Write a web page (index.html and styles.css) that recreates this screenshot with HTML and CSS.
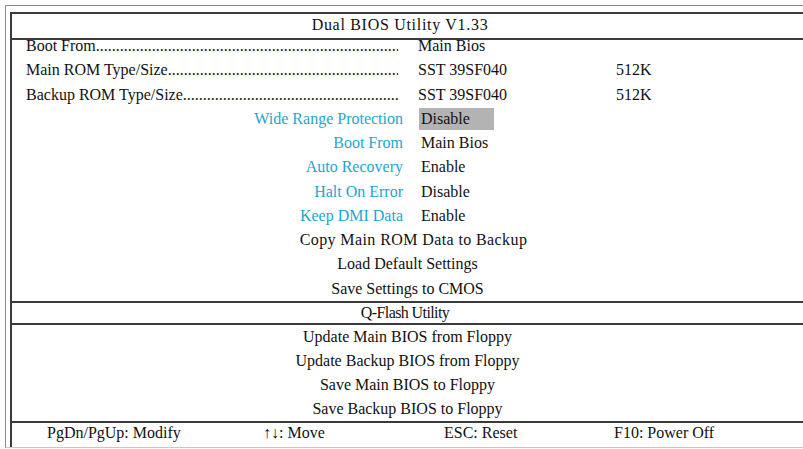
FILE: index.html
```html
<!DOCTYPE html>
<html lang="en">
<head>
  <meta charset="UTF-8">
  <title>Dual BIOS Utility V1.33</title>
  <link rel="stylesheet" href="styles.css">
</head>
<body>
  <div class="frame">
    <div class="panel">
      <div class="title">Dual BIOS Utility V1.33</div>

      <div class="main">
        <div class="info-row">
          <span class="leader">Boot From</span>
          <span>Main Bios</span>
          <span></span>
        </div>
        <div class="info-row">
          <span class="leader">Main ROM Type/Size</span>
          <span>SST 39SF040</span>
          <span>512K</span>
        </div>
        <div class="info-row">
          <span class="leader">Backup ROM Type/Size</span>
          <span>SST 39SF040</span>
          <span>512K</span>
        </div>

        <div class="set-row">
          <span class="set-label">Wide Range Protection</span>
          <span class="set-value selected">Disable</span>
        </div>
        <div class="set-row">
          <span class="set-label">Boot From</span>
          <span class="set-value">Main Bios</span>
        </div>
        <div class="set-row">
          <span class="set-label">Auto Recovery</span>
          <span class="set-value">Enable</span>
        </div>
        <div class="set-row">
          <span class="set-label">Halt On Error</span>
          <span class="set-value">Disable</span>
        </div>
        <div class="set-row">
          <span class="set-label">Keep DMI Data</span>
          <span class="set-value">Enable</span>
        </div>

        <div class="action wide">Copy Main ROM Data to Backup</div>
        <div class="action">Load Default Settings</div>
        <div class="action">Save Settings to CMOS</div>
      </div>

      <div class="subtitle">Q-Flash Utility</div>

      <div class="flash">
        <div class="action">Update Main BIOS from Floppy</div>
        <div class="action">Update Backup BIOS from Floppy</div>
        <div class="action">Save Main BIOS to Floppy</div>
        <div class="action">Save Backup BIOS to Floppy</div>
      </div>

      <div class="keys">
        <span>PgDn/PgUp: Modify</span>
        <span>&uarr;&darr;: Move</span>
        <span>ESC: Reset</span>
        <span>F10: Power Off</span>
      </div>
    </div>
  </div>
</body>
</html>
```

FILE: styles.css
```css
/* Page looks like a scanned manual page, so a serif face all over */
body {
  margin: 0;
  background: #fff;
  color: #111;
  font-family: "Liberation Serif", "Times New Roman", serif;
  font-size: 16px;
  overflow: hidden;
}

/* outer thin gray line of the double frame */
.frame {
  margin: 5px 0 0 5px;
  padding: 6px 0 0 4px;
  border-left: 1px solid #8a8a8a;
  border-top: 1px solid #8a8a8a;
  border-bottom: 1px solid #c8c8c8;
}

/* inner dark line */
.panel {
  border-left: 2px solid #3a3a3a;
  border-top: 2px solid #3a3a3a;
}

.title {
  text-align: center;
  padding-right: 15px;
  letter-spacing: 0.7px;
  line-height: 22px;
  padding-bottom: 2px;
  border-bottom: 2px solid #3a3a3a;
}

.main {
  margin-top: -6px;
  border-bottom: 2px solid #3a3a3a;
}

.info-row {
  display: grid;
  grid-template-columns: 372px 178px auto;
  column-gap: 20px;
  padding-left: 14px;
  line-height: 24.27px;
  white-space: nowrap;
}

/* dotted leader after the label */
.leader {
  overflow: hidden;
}
.leader::after {
  content: "...............................................................................................................";
}

.set-row {
  display: grid;
  grid-template-columns: 377px auto;
  column-gap: 16px;
  padding-left: 14px;
  line-height: 24.27px;
}

.set-label {
  text-align: right;
  color: #1ea6cf;
}

.set-value {
  padding-left: 2px;
}

.selected {
  justify-self: start;
  width: 73px;
  line-height: 22px;
  margin: 1px 0;
  background: #b3b3b3;
}

.action {
  text-align: center;
  line-height: 24.27px;
}

.wide {
  letter-spacing: 0.4px;
  padding-left: 12px;
}

.subtitle {
  text-align: center;
  padding-right: 5px;
  letter-spacing: -0.6px;
  line-height: 20px;
  border-bottom: 2px solid #3a3a3a;
}

.flash {
  border-bottom: 2px solid #3a3a3a;
}

.flash .action {
  line-height: 24px;
}

.keys {
  display: grid;
  grid-template-columns: 216px 181px 170px auto;
  padding-left: 35px;
  line-height: 20px;
  padding-bottom: 4px;
}
```
